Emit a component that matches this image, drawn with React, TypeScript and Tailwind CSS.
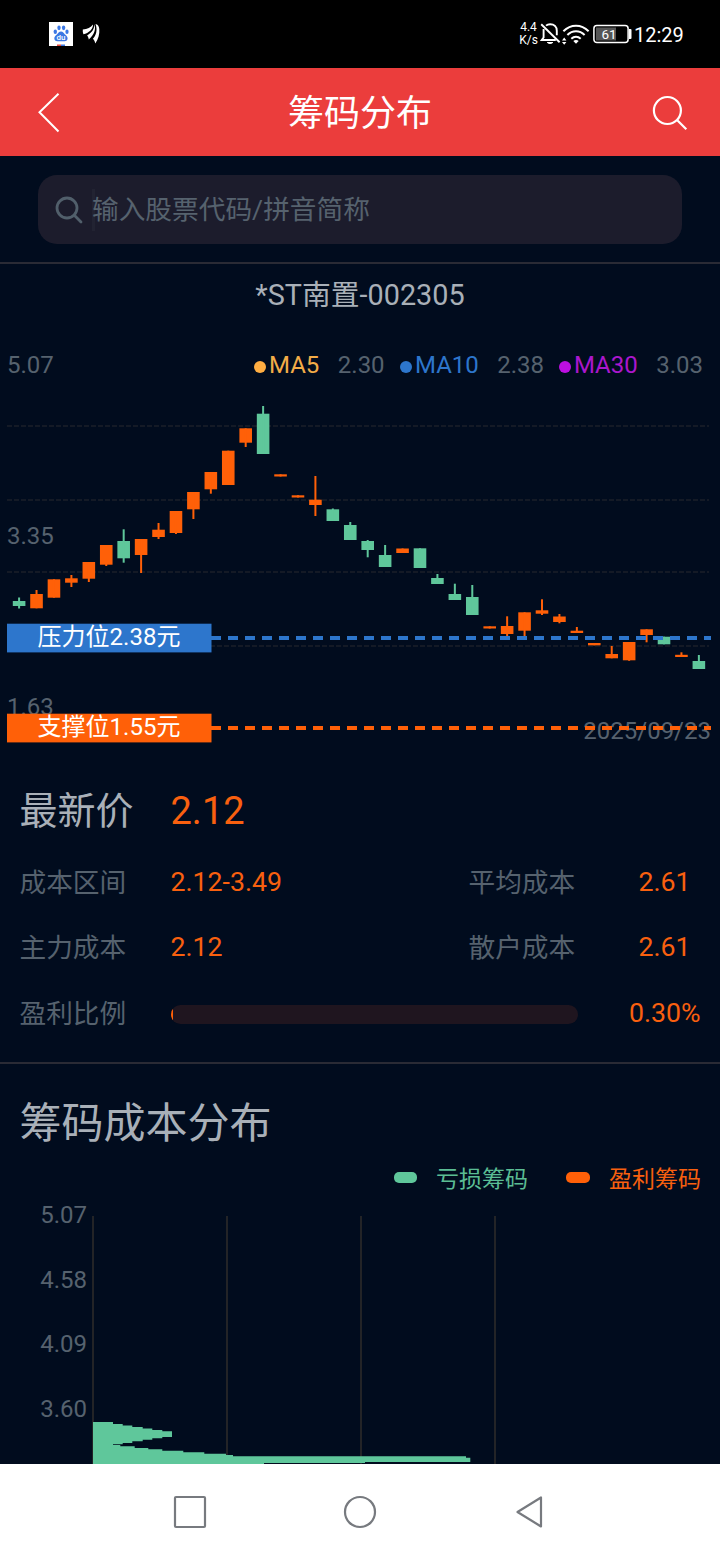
import React from "react";

const GREEN = "#5fc79b";
const ORANGE = "#ff6008";

type Candle = [up: 0 | 1, top: number, bottom: number, high: number, low: number];

// Body and wick extents, in chart pixels.
const candles: Candle[] = [
  [0, 601, 606, 597.5, 608.5],
  [1, 594, 608.3, 590, 608.3],
  [1, 579.3, 597.7, 579.3, 597.7],
  [1, 578.3, 582.7, 575, 587],
  [1, 562, 578.7, 562, 582],
  [1, 545, 564.7, 545, 566],
  [0, 541, 558.3, 529.3, 562.7],
  [1, 539, 555, 539, 573],
  [1, 529.7, 537, 523, 539],
  [1, 511, 533, 511, 534],
  [1, 492, 509.3, 492, 519],
  [1, 472, 489.3, 472, 493.7],
  [1, 450.7, 485, 450.7, 485],
  [1, 428.3, 442.7, 428.3, 447],
  [0, 413.7, 454, 406, 454],
  [1, 474.3, 476.5, 474.3, 476.5],
  [1, 495.3, 497.5, 495.3, 497.5],
  [1, 499.7, 505, 476, 516],
  [0, 509.3, 521, 508.5, 521],
  [0, 525, 540, 522, 540],
  [0, 541, 550, 540, 557.3],
  [0, 555, 567, 545, 567],
  [1, 548.5, 553, 548.5, 553],
  [0, 548.3, 568, 548.3, 568],
  [0, 578, 584, 574, 584],
  [0, 594, 600, 583.7, 600],
  [0, 597, 615, 585, 615],
  [1, 626.3, 628.5, 626.3, 628.5],
  [1, 626, 634, 616.3, 636],
  [1, 612.3, 630.7, 612.3, 636],
  [1, 610.3, 613.7, 599.3, 615],
  [1, 616.5, 622, 614, 623.3],
  [1, 630.7, 633, 627, 633],
  [1, 643, 645.3, 643, 645.3],
  [1, 654, 658.3, 646, 658.3],
  [1, 642, 660.3, 642, 660.8],
  [1, 629.3, 635, 629.3, 642.3],
  [0, 636.7, 644.3, 636.7, 644.3],
  [1, 654.8, 657, 652.3, 657],
  [0, 661, 669, 655, 669],
];

const averages = [
  { name: "MA5", value: "2.30", dot: "bg-[#ffae42]", text: "text-[#f3ac48]", width: "w-[146px]" },
  { name: "MA10", value: "2.38", dot: "bg-[#2d76cc]", text: "text-[#2d76cc]", width: "w-[159px]" },
  { name: "MA30", value: "3.03", dot: "bg-[#bd0fe1]", text: "text-[#ab17cd]", width: "w-[144px]" },
];

function StatusBar() {
  return (
    <div className="flex h-[68px] items-center bg-black pl-[49px] text-white">
      <svg className="block h-6 w-6" viewBox="0 0 24 24">
        <rect width="24" height="24" fill="#fff" />
        <g fill="#3c78e4">
          <ellipse cx="6.3" cy="9.8" rx="1.7" ry="2.2" />
          <ellipse cx="10" cy="5.8" rx="1.7" ry="2.4" />
          <ellipse cx="14.600" cy="5.8" rx="1.7" ry="2.4" />
          <ellipse cx="18" cy="9.8" rx="1.6" ry="2.2" />
          <path d="M12 9.500c2 0 2.800 1.800 4 3 1.400 1.200 2.600 2.100 2.600 3.800 0 2-1.300 2.900-3 2.900H8.300c-1.700 0-3-.9-3-2.900 0-1.700 1.300-2.600 2.600-3.800 1.200-1.200 2.100-3 4.100-3z" />
        </g>
        <text x="12" y="18" textAnchor="middle" fontSize="8" fontWeight="500" fill="#fff" fontFamily="Roboto, sans-serif">du</text>
        <rect x="8" y="22.500" width="4" height="1.500" fill="#e8483c" />
        <rect x="12" y="22.500" width="4" height="1.500" fill="#3c78e4" />
      </svg>
      <svg className="ml-[9px] block h-6 w-[20px]" viewBox="0 0 20 24" fill="#fff">
        <path d="M13.500 2c2.200.3 3.500 2 3.800 5 .4 5-.9 10-4 14.600C12.800 19 11.800 17.800 10.900 16.800 14 13.500 15.800 8 13.500 2z" />
        <path d="M12.200 2.200c2 4.300.5 10-5.400 15.300-.3-2-.8-3-1.700-4C10.200 10.300 12.500 7 12.200 2.200z" />
        <path d="M11 2.500c.2 4.500-4.200 8.600-9.600 9.800C.8 10.500.6 9 .8 7.400 5.400 7.200 8.800 5.300 11 2.500z" />
      </svg>
      <div className="ml-[416px] mr-[1px] w-[21px] text-center text-[12px] leading-[13px]">
        <div>4.4</div>
        <div className="whitespace-nowrap">K/s</div>
      </div>
      <svg className="block h-[24px] w-[22px]" viewBox="0 0 22 24" fill="none" stroke="#fff" strokeWidth="1.900">
        <path d="M6 3.600C7 2.700 8.600 2.200 10.200 2.200c4 0 6.600 2.600 6.600 6.500v4.600M3.600 7v8.500L1.800 18h14" />
        <path d="M1.200 2.200 19.600 20.200" />
        <path d="M7.300 20.500c1.200 1.300 4.300 1.300 5.500 0z" fill="#fff" strokeWidth="1" />
      </svg>
      <svg className="block h-[24px] w-[28px]" viewBox="0 0 28 24" fill="none" stroke="#fff" strokeWidth="2">
        <path d="M1.400 9.200C8.800 1.800 19.200 1.800 26.600 9.200M5.400 13C10.400 8 17.600 8 22.600 13M9.300 16.700c2.800-2.500 6.600-2.500 9.400 0" />
        <path d="M11.300 19c1.500-1.300 3.900-1.300 5.400 0L14 21.800z" fill="#fff" stroke="none" />
        <path d="M0 18.400 2.200 15.500 4.400 18.400zM0 20 2.200 22.800 4.400 20z" fill="#fff" stroke="none" />
      </svg>
      <svg className="ml-[3px] block h-[20px] w-[39px]" viewBox="0 0 39 20">
        <rect x="0.900" y="1.400" width="34.200" height="17.200" rx="3" fill="none" stroke="#fff" strokeWidth="1.500" />
        <rect x="3" y="3.500" width="20" height="13" fill="#555" />
        <path d="M36 5h1.500q1 0 1 1v8q0 1-1 1H36z" fill="#fff" />
        <text x="16" y="14.900" textAnchor="middle" fontSize="13.500" fill="#fff" fontFamily="Roboto, sans-serif">61</text>
      </svg>
      <div className="ml-[2px] pt-[2px] text-[20px] leading-6">12:29</div>
    </div>
  );
}

function Header() {
  return (
    <header className="flex h-[88px] items-center justify-between bg-[#eb3d3c] px-8 text-white">
      <svg className="block h-[44px] w-[36px]" viewBox="0 0 36 44" fill="none" stroke="#fff" strokeWidth="2">
        <path d="M26.500 3.700 7.500 22.200 26.500 41.500" />
      </svg>
      <h1 className="pt-[4px] text-[36px] leading-[44px]">筹码分布</h1>
      <svg className="block h-[40px] w-[36px]" viewBox="0 0 36 40" fill="none" stroke="#fff" strokeWidth="2.200">
        <circle cx="15.400" cy="18.500" r="13.500" />
        <path d="M25 28 34.300 37.300" />
      </svg>
    </header>
  );
}

function SearchBar() {
  return (
    <div className="h-[108px] border-b-2 border-[#2a2b35] px-[38px] pt-[19px]">
      <div className="flex h-[69px] items-center rounded-[19px] bg-[#1c1c2c] pl-[17px]">
        <svg className="block h-7 w-7" viewBox="0 0 28 28" fill="none" stroke="#515f6b" strokeWidth="2.800">
          <circle cx="12" cy="12" r="10" />
          <path d="M19.300 19.300 26 26" strokeLinecap="round" />
        </svg>
        <div className="ml-[9px] h-[42px] w-[3px] bg-[#222332]" />
        <span className="-ml-[3px] text-[26.700px] leading-[40px] text-[#56626e]">输入股票代码/拼音简称</span>
      </div>
    </div>
  );
}

function PriceTag({ y, color, label }: { y: number; color: string; label: string }) {
  return (
    <g>
      <path d={`M211 ${y}H711`} stroke={color} strokeWidth="4" strokeDasharray="10 7" />
      <rect x="7" y={y - 14.300} width="204.500" height="28.700" fill={color} />
      <text x="109" y={y + 7} textAnchor="middle" fill="#fff">{label}</text>
    </g>
  );
}

function CandleChart() {
  return (
    <section>
      <h2 className="pt-[9px] text-center text-[28.800px] leading-[44px] text-[#a9b0b8]">*ST南置-002305</h2>
      <div className="mt-[32px] flex h-[32px] items-center pl-[7px] text-[24px] leading-[32px] text-[#56626e]">
        <span className="w-[247px]">5.07</span>
        {averages.map((a) => (
          <div key={a.name} className={`flex items-center ${a.width}`}>
            <span className={`mt-[4px] h-3 w-3 rounded-full ${a.dot}`} />
            <span className={`ml-[3px] ${a.text}`}>{a.name}</span>
            <span className="ml-[18.500px]">{a.value}</span>
          </div>
        ))}
      </div>
      <svg className="mt-[1px] block h-[378px] w-[720px]" viewBox="0 382 720 378" fontSize="24">
        <g stroke="#141a26" strokeWidth="2" strokeDasharray="5 2">
          {[426, 500, 572, 646].map((y) => (
            <path key={y} d={`M7 ${y}H709`} />
          ))}
        </g>
        <g fill="#56626e">
          <text x="7" y="544">3.35</text>
          <text x="7" y="715">1.63</text>
          <text x="711" y="739" textAnchor="end">2025/09/23</text>
        </g>
        {candles.map(([up, top, bottom, high, low], i) => {
          const x = 19.100 + i * 17.430;
          return (
            <g key={i} fill={up ? ORANGE : GREEN}>
              <rect x={x - 6.300} y={top} width="12.600" height={bottom - top} />
              <rect x={x - 1} y={high} width="2" height={low - high} />
            </g>
          );
        })}
        <PriceTag y={638} color="#2d76cc" label="压力位2.38元" />
        <PriceTag y={728} color={ORANGE} label="支撑位1.55元" />
      </svg>
    </section>
  );
}

function StatRow({ label, value, label2, value2 }: { label: string; value: string; label2: string; value2: string }) {
  return (
    <div className="flex h-[65px] items-center">
      <span className="w-[151px] pt-[2px] text-[#56626e]">{label}</span>
      <span className="w-[298px]">{value}</span>
      <span className="w-[170px] pt-[2px] text-[#56626e]">{label2}</span>
      <span>{value2}</span>
    </div>
  );
}

function Stats() {
  return (
    <section className="h-[304px] border-b-2 border-[#2a2b35] pl-[19.500px] text-[26.700px] text-[#f9600f]">
      <div className="flex h-[90px] items-center pt-[13px] text-[38px]">
        <span className="w-[151px] text-[#a9b0b8]">最新价</span>
        <span>2.12</span>
      </div>
      <StatRow label="成本区间" value="2.12-3.49" label2="平均成本" value2="2.61" />
      <StatRow label="主力成本" value="2.12" label2="散户成本" value2="2.61" />
      <div className="flex h-[67px] items-center">
        <span className="w-[151.500px] pt-[2px] text-[#56626e]">盈利比例</span>
        <div className="mt-[2px] h-[19px] w-[407px] overflow-hidden rounded-full bg-[#1f151f]">
          <div className="h-full w-[1.500px] bg-[#ff6008]" />
        </div>
        <span className="ml-[51px]">0.30%</span>
      </div>
    </section>
  );
}

function Distribution() {
  return (
    <section className="h-[400px] overflow-hidden">
      <h2 className="pl-[19.500px] pt-[32px] text-[42px] leading-[56px] text-[#a9b0b8]">筹码成本分布</h2>
      <div className="mt-[10px] flex h-8 items-center justify-end pr-[19px] text-[23px]">
        <span className="-mt-[1px] h-[11px] w-[23px] rounded-[5px] bg-[#5fc79b]" />
        <span className="ml-[19px] pt-[4px] text-[#5bbd94]">亏损筹码</span>
        <span className="-mt-[1px] ml-[38px] h-[11px] w-6 rounded-[5px] bg-[#ff6008]" />
        <span className="ml-[19px] pt-[4px] text-[#f9600f]">盈利筹码</span>
      </div>
      <svg className="block h-[270px] w-[720px]" viewBox="0 1194 720 270" fontSize="24">
        <g fill="#56626e" textAnchor="end">
          <text x="87" y="1223">5.07</text>
          <text x="87" y="1288">4.58</text>
          <text x="87" y="1352">4.09</text>
          <text x="87" y="1417">3.60</text>
        </g>
        <path d="M93 1216V1464M227 1216V1464M361 1216V1464M495 1216V1464" stroke="#232427" strokeWidth="2" />
        <path
          fill={GREEN}
          d="M93 1422H113V1424H122.700V1425.500H132.300V1427H142.700V1428.500H152.300V1430H162.300V1431.300H172V1437H162.300V1438.300H152.300V1439.700H142.700V1441.300H132.300V1443H122.700V1444.300H113V1445H120.300V1446.300H134.700V1448H148.300V1449.300H162.300V1450.700H183.300V1452.300H204.300V1453.700H226V1455H233V1456.300H466V1457.700H470.300V1462H365V1463H264V1464H93Z"
        />
      </svg>
    </section>
  );
}

function NavBar() {
  return (
    <nav className="flex h-24 items-center bg-white pl-[172px]">
      <svg className="block h-9 w-[376px]" viewBox="0 0 376 36" fill="none" stroke="#777a7f" strokeWidth="2.200">
        <rect x="3" y="3" width="30" height="30" rx="1" />
        <circle cx="188" cy="18" r="15" />
        <path d="M369 3.500V32.500L345.500 18Z" strokeLinejoin="round" />
      </svg>
    </nav>
  );
}

export default function App() {
  return (
    <div className="h-[1560px] w-[720px] overflow-hidden bg-[#010c1e] font-['Roboto','Noto_Sans_CJK_SC',sans-serif]">
      <StatusBar />
      <Header />
      <SearchBar />
      <CandleChart />
      <Stats />
      <Distribution />
      <NavBar />
    </div>
  );
}
